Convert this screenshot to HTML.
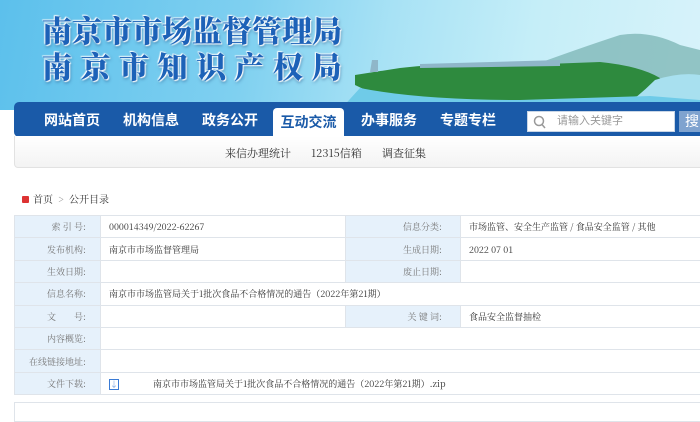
<!DOCTYPE html>
<html><head><meta charset="utf-8"><style>
*{margin:0;padding:0;box-sizing:border-box}
body{width:700px;height:411px;overflow:hidden;background:#fff;font-family:"Liberation Sans","Noto Sans CJK SC",sans-serif;position:relative}
.hdr{position:absolute;left:0;top:0;width:700px;height:110px;background:linear-gradient(100deg,#5cc0ec 0%,#7fd0f0 35%,#a8e2f5 55%,#c5eef8 75%,#d8f3fa 100%)}
.t{position:absolute;left:42px;font-family:"Noto Serif CJK SC",serif;font-weight:900;color:#1d62b8;font-size:30px;line-height:30px;white-space:nowrap;text-shadow:0 0 2px #fff,1px 1px 1px #fff,-1px -1px 1px #fff,1px 2px 3px rgba(0,40,100,.5)}
.nav{position:absolute;left:14px;top:102px;width:700px;height:35px;background:#1a5aa8;border-radius:5px 0 0 5px}
.nav span{position:absolute;top:10px;color:#fff;font-weight:bold;font-size:14px;line-height:16px}
.act{position:absolute;left:273px;top:108px;width:71px;height:30px;background:#fff;border-radius:4px 4px 0 0;color:#1a5aa8;font-weight:bold;font-size:14px;text-align:center;line-height:28px}
.srch{position:absolute;left:527px;top:111px;width:148px;height:21px;background:#fff;border:1px solid #c9d6e6;font-size:11px;color:#999;line-height:19px;padding-left:29px}
.btn{position:absolute;left:679px;top:111px;width:30px;height:21px;background:#7fa3cf;color:#fff;font-size:14px;line-height:21px;padding-left:6px}
.sub{position:absolute;left:14px;top:136px;width:700px;height:32px;background:linear-gradient(#fff,#f3f3f3);border:1px solid #e2e2e2;border-top:none;border-radius:0 0 0 4px}
.sub span{position:absolute;top:9px;font-family:"Noto Serif CJK SC",serif;font-size:11px;color:#333}
.bc{position:absolute;left:22px;top:191px;font-size:10px;color:#333;font-family:"Noto Serif CJK SC",serif}
table{position:absolute;left:14px;top:215px;width:700px;border-collapse:collapse;font-family:"Noto Serif CJK SC",serif;font-size:9px}
td{border:1px solid #dfe4ea;height:22.4px;padding:0 8px;color:#333}
td.l{background:#e6f1fb;color:#777;text-align:right;width:86px;padding-right:14px}
td.l2{background:#e6f1fb;color:#777;text-align:right;width:115px;padding-right:18px}
.v1{width:245px}
.box{position:absolute;left:14px;top:402px;width:700px;height:20px;border:1px solid #dfe4ea}
</style></head><body>
<div class="hdr">
<svg style="position:absolute;left:0;top:0" width="700" height="110">
<path d="M520 70 Q580 48 620 35 Q650 30 680 45 L700 50 L700 110 L520 110Z" fill="#7fb8b8" opacity=".8"/>
<path d="M355 75 L400 68 Q450 62 520 65 L600 62 Q640 66 660 78 L650 95 Q600 100 560 100 L420 100 Q380 98 355 85Z" fill="#2e8a3e"/>
<path d="M370 72 L372 60 L378 60 L378 72Z M420 64 L560 60 L560 66 L420 68Z" fill="#8fb6c9"/>
<path d="M655 80 Q680 72 700 75 L700 110 L620 110 Q640 95 655 80Z" fill="#a8e0ef"/>
<path d="M360 88 Q420 100 520 100 L650 96 L700 100 L700 110 L340 110Z" fill="#6fcbe8"/>
</svg>
<div class="t" style="top:14px">南京市市场监督管理局</div>
<div class="t" style="top:50px;letter-spacing:8.5px">南京市知识产权局</div>
</div>
<div class="nav">
<span style="left:30px">网站首页</span><span style="left:109px">机构信息</span><span style="left:188px">政务公开</span>
<span style="left:347px">办事服务</span><span style="left:426px">专题专栏</span>
</div>
<div class="act">互动交流</div>
<div class="srch"><svg style="position:absolute;left:5px;top:3px" width="13" height="14"><circle cx="6" cy="6" r="4.5" fill="none" stroke="#999" stroke-width="1.5"/><line x1="9" y1="9.5" x2="12" y2="13" stroke="#999" stroke-width="1.5"/></svg>请输入关键字</div>
<div class="btn">搜</div>
<div class="sub"><span style="left:210px">来信办理统计</span><span style="left:296px">12315信箱</span><span style="left:367px">调查征集</span></div>
<div class="bc"><span style="display:inline-block;width:7px;height:7px;background:#d33;border-radius:1px;margin-right:4px"></span>首页 &nbsp;<span style="color:#888">&gt;</span>&nbsp; 公开目录</div>
<table>
<tr><td class="l">索 引 号:</td><td class="v1">000014349/2022-62267</td><td class="l2">信息分类:</td><td>市场监管、安全生产监管 / 食品安全监管 / 其他</td></tr>
<tr><td class="l">发布机构:</td><td>南京市市场监督管理局</td><td class="l2">生成日期:</td><td>2022 07 01</td></tr>
<tr><td class="l">生效日期:</td><td></td><td class="l2">废止日期:</td><td></td></tr>
<tr><td class="l">信息名称:</td><td colspan="3">南京市市场监管局关于1批次食品不合格情况的通告（2022年第21期）</td></tr>
<tr><td class="l">文　　号:</td><td></td><td class="l2">关 键 词:</td><td>食品安全监督抽检</td></tr>
<tr><td class="l">内容概览:</td><td colspan="3"></td></tr>
<tr><td class="l">在线链接地址:</td><td colspan="3"></td></tr>
<tr><td class="l">文件下载:</td><td colspan="3"><span style="display:inline-block;width:10px;height:11px;border:1px solid #3a7bd5;color:#3a7bd5;font-size:8px;line-height:9px;text-align:center;vertical-align:middle">↓</span><span style="margin-left:34px">南京市市场监管局关于1批次食品不合格情况的通告（2022年第21期）.zip</span></td></tr>
</table>
<div class="box"></div>
</body></html>
